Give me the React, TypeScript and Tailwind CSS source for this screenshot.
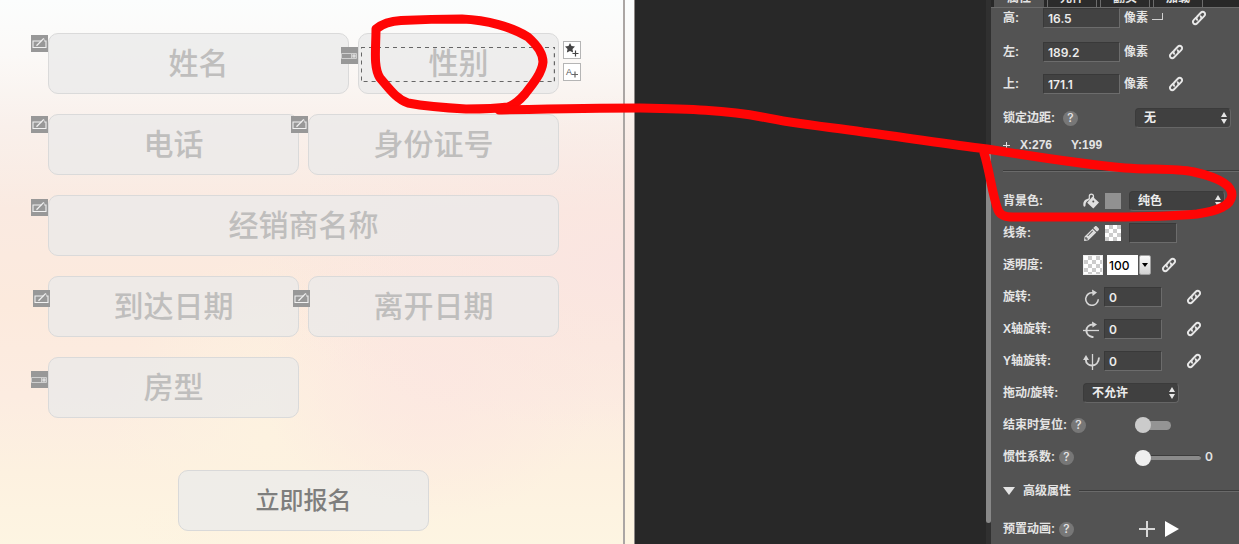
import { useState } from "react";
import type { ReactNode } from "react";
import { FaPencilAlt } from "react-icons/fa";

const tabs = ["属性", "元件", "翻页", "加载"];

/* ---------- icons ---------- */

function ChainIcon() {
  return (
    <svg viewBox="0 0 16 16" className="size-4" fill="none" stroke="#e8e8e8" strokeWidth="1.9" strokeLinecap="round">
      <path d="M6.2 9.8a2.4 2.4 0 0 1 0-3.3L10 2.5a2.3 2.3 0 0 1 3.4 0 2.3 2.3 0 0 1 0 3.3L11 8.3" />
      <path d="M9.7 6.3a2.4 2.4 0 0 1 0 3.3L5.9 13.5a2.3 2.3 0 0 1-3.3 0 2.3 2.3 0 0 1 0-3.3L5 7.7" />
    </svg>
  );
}

function BucketIcon() {
  return (
    <svg viewBox="0 0 16 16" className="size-4" fill="none">
      <path d="M9.5 3.5 16 9.6 10.3 15.4 4.2 9.7Z" fill="#e0e0e0" />
      <path d="M6.3 6.5V3.2a2.1 2.1 0 0 1 4.2 0V8" stroke="#e0e0e0" strokeWidth="1.2" />
      <path d="M7 5.4C3 5.300.2 7.500.3 11.500c0 3 2.300 2.900 2.300 0C2.600 9.500 4 8 5.500 7.500Z" fill="#e0e0e0" />
      <circle cx="10.3" cy="8.5" r="1" fill="#535353" />
    </svg>
  );
}

function EditBadge() {
  return (
    <svg viewBox="0 0 17 17" className="size-[17px] bg-[#989898]" fill="none">
      <path d="M10.500 6H2v6.500h13V6h-1" stroke="#f1f1f1" strokeWidth="1.100" />
      <path d="M5.500 10.800 12.800 3.400" stroke="#f1f1f1" strokeWidth="1.300" />
      <path d="M12.800 3.500 14 7" stroke="#d8d8d8" strokeWidth=".8" />
    </svg>
  );
}

function SelectBadge() {
  return (
    <svg viewBox="0 0 17 17" className="size-[17px] bg-[#989898]" fill="none">
      <path d="M.5 6.500h15v5H.5ZM10.500 6.500v5" stroke="#cfcfcf" />
      <rect x="12" y="8" width="2" height="2" stroke="#f4f4f4" />
    </svg>
  );
}

function TurnIcon({ kind }: { kind: string }) {
  return (
    <svg viewBox="0 0 17 17" className="size-[17px]" fill="none" stroke="#d6d6d6" strokeWidth="1.600">
      {kind === "z" && (
        <>
          <path d="M10 3.800a6.300 6.300 0 1 0 5.300 6.500" />
          <path d="M9 .5 14 3.500 9.500 7Z" fill="#d6d6d6" stroke="none" />
        </>
      )}
      {kind === "x" && (
        <>
          <path d="M0 9.500h16" strokeWidth="1.300" />
          <path d="M10.500 3.500C1 3.500 1 15.500 10.500 16.200" strokeWidth="2" />
          <path d="M9 .5 14 3.500 9.500 6.500Z" fill="#d6d6d6" stroke="none" />
        </>
      )}
      {kind === "y" && (
        <>
          <path d="M9.500 1v16" strokeWidth="1.300" />
          <path d="M2.800 6.500C3 14.800 15.500 14.800 16 4.500" strokeWidth="1.900" />
          <path d="M0 7 3 2 6 7Z" fill="#d6d6d6" stroke="none" />
        </>
      )}
    </svg>
  );
}

function Help() {
  return (
    <button
      type="button"
      aria-label="帮助"
      className="flex size-[15px] items-center justify-center rounded-full bg-[#777777] font-['Inter',sans-serif] text-xs leading-none font-medium text-[#e4e4e4]"
    >
      ?
    </button>
  );
}

/* ---------- form on the artboard ---------- */

type FieldProps = {
  label: string;
  className?: string;
  badgeClass: string;
  dropdown?: boolean;
  children?: ReactNode;
};

const boxClass =
  "h-[61px] w-full appearance-none rounded-[10px] border border-[#dadada] bg-[#e9e9e9]/75 text-center text-[30px] font-medium";

function Field({ label, className = "flex-1", badgeClass, dropdown, children }: FieldProps) {
  return (
    <div className={`relative min-w-0 ${className}`}>
      {dropdown ? (
        <select aria-label={label} className={`${boxClass} text-[#bfbebd] [text-align-last:center]`}>
          <option>{label}</option>
        </select>
      ) : (
        <input
          type="text"
          aria-label={label}
          placeholder={label}
          className={`${boxClass} text-[#777777] placeholder:text-[#bfbebd]`}
        />
      )}
      <span className={`absolute ${badgeClass}`}>{dropdown ? <SelectBadge /> : <EditBadge />}</span>
      {children}
    </div>
  );
}

function Artboard() {
  return (
    <main className="overflow-hidden border-r border-[#8c8785] bg-[radial-gradient(ellipse_at_100%_48%,#fae5e1_0%,#fae5e100_42%),radial-gradient(ellipse_at_68%_68%,#fce8e1_0%,#fce8e100_28%),radial-gradient(ellipse_at_42%_80%,#fdf2e0_0%,#fdf2e000_30%),linear-gradient(#fbfdfd_0%,#fbf9f7_10%,#f9f0eb_23%,#faeae1_38%,#fceadd_55%,#fcece1_72%,#fdf1e0_86%,#fdf5e2_100%)] pr-[9px]">
      <form
        onSubmit={(e) => e.preventDefault()}
        className="flex h-full flex-col gap-5 border-r-2 border-[#aba6a4] pt-[33px] pr-16 pl-12"
      >
        <div className="flex gap-[9px]">
          <Field label="姓名" className="flex-[3]" badgeClass="top-[2px] -left-[17px]" />
          <Field label="性别" className="flex-[2]" badgeClass="top-[14px] -left-[17px]" dropdown>
            <div className="pointer-events-none absolute top-[14px] right-1 bottom-3 left-[3px]">
              <svg className="size-full" fill="none">
                <rect x="0" y="0" width="100%" height="100%" stroke="#666666" strokeWidth="2" strokeDasharray="4 4" />
              </svg>
            </div>
            <div className="absolute top-2 left-full ml-1 flex flex-col gap-1">
              <button type="button" aria-label="添加效果" className="size-[18px] border border-[#b5b5b5] bg-white">
                <svg viewBox="0 0 16 16" className="size-4">
                  <path d="M6 1l1.500 3.100 3.500.5-2.500 2.400.6 3.500L6 8.900 2.900 10.500l.6-3.500L1 4.600l3.500-.5Z" fill="#444444" />
                  <path d="M11.500 8.500v6M8.500 11.500h6" stroke="#444444" strokeWidth="1.200" />
                </svg>
              </button>
              <button
                type="button"
                aria-label="添加动画"
                className="relative size-[18px] border border-[#b5b5b5] bg-white text-left font-['Liberation_Sans',sans-serif] text-[9px] leading-[12px] text-[#555555]"
              >
                <span className="pl-[2px]">A</span>
                <svg viewBox="0 0 16 16" className="absolute inset-0 size-4">
                  <path d="M11 7.500v6M8 10.500h6" stroke="#666666" strokeWidth="1.200" />
                </svg>
              </button>
            </div>
          </Field>
        </div>
        <div className="flex gap-[9px]">
          <Field label="电话" badgeClass="top-[2px] -left-[17px]" />
          <Field label="身份证号" badgeClass="top-[2px] -left-[17px]" />
        </div>
        <div className="flex">
          <Field label="经销商名称" badgeClass="top-1 -left-[17px]" />
        </div>
        <div className="flex gap-[9px]">
          <Field label="到达日期" badgeClass="top-[14px] -left-[15px]" />
          <Field label="离开日期" badgeClass="top-[14px] -left-[15px]" />
        </div>
        <div className="grid grid-cols-2 gap-[9px]">
          <Field label="房型" badgeClass="top-[14px] -left-[17px]" dropdown />
        </div>
        <div className="flex justify-center pt-8">
          <button
            type="submit"
            className="h-[61px] w-[49%] rounded-[10px] border border-[#d9d9d9] bg-[#e9ebeb]/75 text-2xl font-medium text-[#7e7e7d]"
          >
            立即报名
          </button>
        </div>
      </form>
    </main>
  );
}

/* ---------- property panel ---------- */

const inputClass =
  "h-5 border border-t-[#393939] border-r-[#6c6c6c] border-b-[#6c6c6c] border-l-[#393939] bg-[#424242] px-1 font-['Inter',sans-serif] text-xs font-semibold text-[#ececec]";

function Dropdown({ label, value }: { label: string; value: string }) {
  return (
    <div className="relative w-24">
      <select
        aria-label={label}
        className="h-5 w-full appearance-none rounded-[4px] border border-[#3b3b3b] border-r-[#666666] border-b-[#666666] bg-[#404040] pl-2 text-xs font-bold text-[#ececec]"
      >
        <option>{value}</option>
      </select>
      <svg viewBox="0 0 6 12" className="pointer-events-none absolute top-1 right-1 h-3 w-[6px]" fill="#e6e6e6">
        <path d="M0 5 3 0l3 5ZM0 7h6L3 12Z" />
      </svg>
    </div>
  );
}

function LinkButton({ className = "" }: { className?: string }) {
  return (
    <button type="button" aria-label="关联" className={className}>
      <ChainIcon />
    </button>
  );
}

function SizeRow({ label, value, className = "h-8", first }: { label: string; value: string; className?: string; first?: boolean }) {
  return (
    <div className={`flex items-center ${className}`}>
      <label className="flex items-center">
        <span className="w-10">{label}:</span>
        <input type="text" defaultValue={value} className={`w-[77px] ${inputClass}`} />
        <span className="pl-1">像素</span>
      </label>
      {first ? (
        <>
          <span className="mb-1 ml-1 h-[7px] w-[11px] border-r border-b border-[#d0d0d0]" />
          <LinkButton className="ml-7" />
        </>
      ) : (
        <LinkButton className="ml-5" />
      )}
    </div>
  );
}

function TurnRow({ label, kind }: { label: string; kind: string }) {
  return (
    <div className="flex h-8 items-center">
      <label className="flex items-center">
        <span className="w-20">{label}:</span>
        <TurnIcon kind={kind} />
        <input type="text" defaultValue="0" className={`ml-1 w-[58px] ${inputClass}`} />
      </label>
      <LinkButton className="ml-6" />
    </div>
  );
}

const checker =
  "bg-[repeating-conic-gradient(#cccccc_0%_25%,#ffffff_0%_50%)] bg-[length:8px_8px]";

function PropertyPanel() {
  const [inertia, setInertia] = useState(0);

  return (
    <aside className="bg-[#535353] text-xs font-bold text-[#e4e4e4]">
      {/* tab strip, scrolled mostly out of view */}
      <div className="flex h-2 items-end gap-[3px] overflow-hidden border-b border-[#6c6c6c] bg-[#282828] pl-[3px]">
        {tabs.map((tab, i) => (
          <button
            key={tab}
            type="button"
            className={
              i === 0
                ? "h-[17px] w-[50px] shrink-0 bg-[#535353] pb-px leading-4"
                : "h-[17px] w-[50px] shrink-0 border-x border-[#6c6c6c] bg-[#2b2b2b] pb-px leading-4"
            }
          >
            {tab}
          </button>
        ))}
      </div>

      <div className="pl-3">
        <SizeRow label="高" value="16.5" className="mb-2 h-5" first />
        <SizeRow label="左" value="189.2" />
        <SizeRow label="上" value="171.1" />

        <div className="flex h-9 items-center">
          <div className="flex w-[132px] items-center gap-2">
            锁定边距: <Help />
          </div>
          <Dropdown label="锁定边距" value="无" />
        </div>

        <div className="flex h-[18px] items-center">
          <svg viewBox="0 0 7 7" className="mr-[10px] size-[7px]" stroke="#e0e0e0">
            <path d="M3.500 0v7M0 3.500h7" />
          </svg>
          <span className="w-[51px]">X:276</span>
          <span>Y:199</span>
        </div>

        <hr className="mt-4 mb-[13px] h-[2px] border-t border-b border-t-[#3c3c3c] border-b-[#6a6a6a]" />

        <div className="flex h-8 items-center">
          <span className="w-20">背景色:</span>
          <BucketIcon />
          <button type="button" aria-label="背景颜色" className="mr-2 ml-[6px] size-4 bg-[#919191]" />
          <Dropdown label="背景类型" value="纯色" />
        </div>

        <label className="flex h-8 items-center">
          <span className="w-20">线条:</span>
          <span className="flex w-4 justify-center">
            <FaPencilAlt size={15} color="#dddddd" />
          </span>
          <span className={`mr-2 ml-[6px] size-4 ${checker}`} />
          <input type="text" className={`w-12 ${inputClass}`} />
        </label>

        <div className="flex h-8 items-center">
          <label className="flex items-center">
            <span className="w-20">透明度:</span>
            <span className={`size-5 border border-[#eeeeee] ${checker}`} />
            <input
              type="text"
              defaultValue="100"
              className="ml-1 h-5 w-[31px] bg-white pl-[2px] font-['Inter',sans-serif] text-xs font-medium text-black"
            />
          </label>
          <button
            type="button"
            aria-label="选择透明度"
            className="ml-px flex h-5 w-3 items-center justify-center rounded-[2px] border border-[#a0a0a0] bg-linear-to-b from-[#fafafa] to-[#d2d2d2]"
          >
            <svg viewBox="0 0 6 4" className="h-1 w-[6px]">
              <path d="M0 0h6L3 4Z" />
            </svg>
          </button>
          <LinkButton className="ml-[10px]" />
        </div>

        <TurnRow label="旋转" kind="z" />
        <TurnRow label="X轴旋转" kind="x" />
        <TurnRow label="Y轴旋转" kind="y" />

        <div className="flex h-8 items-center">
          <span className="w-20">拖动/旋转:</span>
          <Dropdown label="拖动/旋转" value="不允许" />
        </div>

        <div className="flex h-8 items-center">
          <div className="flex w-[132px] items-center gap-1">
            <label htmlFor="reset">结束时复位:</label>
            <Help />
          </div>
          <input
            id="reset"
            type="checkbox"
            role="switch"
            className="flex h-[9px] w-9 appearance-none items-center rounded-full bg-[#949494] before:size-4 before:rounded-full before:bg-[#cbcbcb] checked:before:ml-5"
          />
        </div>

        <div className="flex h-8 items-center">
          <div className="flex w-[132px] items-center gap-1">
            <label htmlFor="inertia">惯性系数:</label>
            <Help />
          </div>
          <input
            id="inertia"
            type="range"
            min={0}
            max={10}
            value={inertia}
            onChange={(e) => setInertia(Number(e.target.value))}
            className="h-[5px] w-[66px] appearance-none rounded-full border-t border-[#3c3c3c] bg-[#8a8a8a] [&::-webkit-slider-thumb]:size-4 [&::-webkit-slider-thumb]:appearance-none [&::-webkit-slider-thumb]:rounded-full [&::-webkit-slider-thumb]:bg-[#eeeeee]"
          />
          <output htmlFor="inertia" className="ml-1 font-['Inter',sans-serif] font-semibold">
            {inertia}
          </output>
        </div>

        <div className="flex h-9 items-center">
          <button type="button" className="flex items-center gap-2">
            <svg viewBox="0 0 12 8" className="h-2 w-3" fill="#e4e4e4">
              <path d="M0 0h12L6 8Z" />
            </svg>
            高级属性
          </button>
          <hr className="ml-2 h-[2px] flex-1 border-t border-b border-t-[#3c3c3c] border-b-[#6a6a6a]" />
        </div>

        <div className="flex h-10 items-center">
          <div className="flex w-[136px] items-center gap-1">
            预置动画: <Help />
          </div>
          <button type="button" aria-label="添加预置动画">
            <svg viewBox="0 0 16 16" className="size-4" stroke="#d8d8d8" strokeWidth="2">
              <path d="M8 0v16M0 8h16" />
            </svg>
          </button>
          <button type="button" aria-label="播放" className="ml-[10px]">
            <svg viewBox="0 0 14 16" className="h-4 w-[14px]" fill="#ffffff">
              <path d="M0 0 14 8 0 16Z" />
            </svg>
          </button>
        </div>
      </div>
    </aside>
  );
}

/* ---------- page ---------- */

export default function App() {
  return (
    <div className="relative grid h-screen grid-cols-[635fr_351fr_5px_248px] overflow-hidden bg-[#282828] font-['Liberation_Sans','Noto_Sans_CJK_SC',sans-serif]">
      <Artboard />
      <div />
      {/* scrollbar */}
      <div className="flex flex-col bg-[#303030] pt-[150px]">
        <div className="mb-[26px] flex-1 rounded-full bg-[#888888]" />
      </div>
      <PropertyPanel />

      {/* red marker pen */}
      <svg
        viewBox="0 0 1239 544"
        preserveAspectRatio="none"
        className="pointer-events-none absolute inset-0 size-full"
        fill="none"
        stroke="#ff0505"
        strokeWidth="9"
        strokeLinecap="round"
        strokeLinejoin="round"
      >
        <path d="M376 29C382 24 390 21 401 20.500C421 19.500 442 19 462 19C487 20 512 27 528 37C537 45 543 53 543 62C542 73 533 84 525 94C519 101 514 105 508 107C494 109 480 109 466 109C447 108 424 106 408 103C396 99 388 87 380 78C373 67 376 48 376 29" />
        <path d="M499 110C545 109 590 108 640 108C687 109 727 110 762 117C800 125 830 127 863 132C910 138 945 144 987 149C1030 156 1080 164 1125 168C1150 170 1174 168 1194 172C1216 177 1232 184 1232 195C1231 206 1218 211 1197 214C1165 217 1140 217 1113 217H1013C1004 217 1000 215 998 210C992 194 990 172 984 153" />
      </svg>
    </div>
  );
}
